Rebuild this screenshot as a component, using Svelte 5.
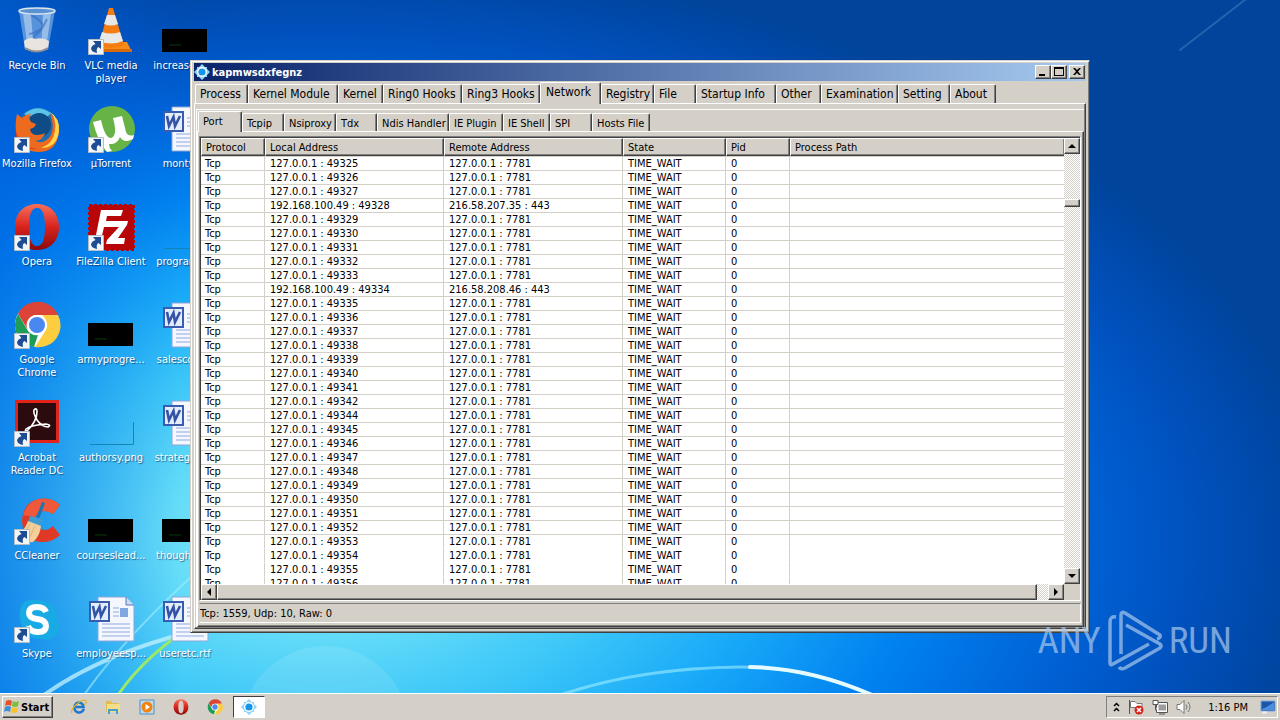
<script>
    const shortcuts = [
        {name: 'Recycle Bin', icon: 'bin'},
        {name: 'Mozilla Firefox', icon: 'firefox', link: true},
        {name: 'Opera', icon: 'opera', link: true},
        {name: 'Google Chrome', icon: 'chrome', link: true},
        {name: 'Acrobat Reader DC', icon: 'acrobat', link: true},
        {name: 'CCleaner', icon: 'ccleaner', link: true},
        {name: 'Skype', icon: 'skype', link: true},
        {name: 'VLC media player', icon: 'vlc', link: true},
        {name: 'µTorrent', icon: 'utorrent', link: true},
        {name: 'FileZilla Client', icon: 'filezilla', link: true},
        {name: 'armyprogre...', icon: 'black'},
        {name: 'authorsy.png', icon: 'faint'},
        {name: 'courseslead...', icon: 'black'},
        {name: 'employeesp...', icon: 'word'},
        {name: 'increasepo...', icon: 'black'},
        {name: 'monty.rtf', icon: 'word'},
        {name: 'programa...', icon: 'faint'},
        {name: 'salescont...', icon: 'word'},
        {name: 'strategyre...', icon: 'word'},
        {name: 'thoughtm...', icon: 'black'},
        {name: 'useretc.rtf', icon: 'word'}
    ];

    const mainTabs = [
        {name: 'Process', width: 53},
        {name: 'Kernel Module', width: 90},
        {name: 'Kernel', width: 45},
        {name: 'Ring0 Hooks', width: 79},
        {name: 'Ring3 Hooks', width: 78},
        {name: 'Network', width: 61},
        {name: 'Registry', width: 53},
        {name: 'File', width: 42},
        {name: 'Startup Info', width: 80},
        {name: 'Other', width: 45},
        {name: 'Examination', width: 77},
        {name: 'Setting', width: 52},
        {name: 'About', width: 46}
    ];

    const networkTabs = [
        {name: 'Port', width: 44},
        {name: 'Tcpip', width: 42},
        {name: 'Nsiproxy', width: 52},
        {name: 'Tdx', width: 41},
        {name: 'Ndis Handler', width: 72},
        {name: 'IE Plugin', width: 54},
        {name: 'IE Shell', width: 47},
        {name: 'SPI', width: 42},
        {name: 'Hosts File', width: 58}
    ];

    // connections that leave the machine, all others go to the local proxy
    const outgoing = {
        49328: '216.58.207.35 : 443',
        49334: '216.58.208.46 : 443'
    };

    const connections = [];
    for (let port = 49325; port <= 49356; port++) {
        if (port === 49343) continue;
        connections.push({
            local: `${outgoing[port] ? '192.168.100.49' : '127.0.0.1'} : ${port}`,
            remote: outgoing[port] ?? '127.0.0.1 : 7781'
        });
    }

    const pinned = [
        {name: 'Internet Explorer', icon: 'ie'},
        {name: 'Windows Explorer', icon: 'folder'},
        {name: 'Media Player', icon: 'player'},
        {name: 'Opera', icon: 'opera'},
        {name: 'Chrome', icon: 'chrome'}
    ];

    let mainTab = $state('Network');
    let networkTab = $state('Port');
</script>

{#snippet picture(kind)}
    {#if kind === 'bin'}
        <svg viewBox="0 0 48 48">
            <path d="M6 4L12 42Q24 48 35 42L42 4Z" fill="#9cc4ec" fill-opacity=".55"/>
            <path d="M10 7L15 42L21 44L18 8ZM30 8L28 43L33 41L38 7Z" fill="#e4f0fb" fill-opacity=".45"/>
            <path d="M18 8Q30 14 30 20Q24 26 16 27M34 12Q28 26 20 30" stroke="#2a62b4" stroke-width="2" fill="none" opacity=".5"/>
            <path d="M11 34Q16 29 22 32Q30 30 36 34L35 42Q24 48 12 42Z" fill="#e9e4df"/>
            <path d="M12 41Q24 48 35 41" stroke="#8d8d92" stroke-width="2" fill="none"/>
            <ellipse cx="24" cy="4" rx="18" ry="3" fill="#5b92d4" stroke="#dce6ee" stroke-width="1.5"/>
        </svg>
    {:else if kind === 'firefox'}
        <svg viewBox="0 0 48 48">
            <circle cx="25" cy="24" r="21" fill="#1f6fb0"/>
            <path d="M11 9Q24 -2 38 8Q34 14 24 12Q16 12 11 9Z" fill="#5cc3e8"/>
            <circle cx="26" cy="20" r="12" fill="#0f4c86"/>
            <path d="M4 9L9 13Q13 9 18 9Q15 13 18 17L23 19Q22 23 17 24Q18 30 24 30Q29 30 32 28Q30 35 22 36Q32 40 38 30Q42 20 37 9Q46 15 46 25Q45 47 25 47Q5 46 3 28Q2 17 4 9Z" fill="#ee6a1f"/>
            <path d="M37 7Q44 14 42 26Q40 39 28 43Q44 43 46 26Q47 13 37 7Z" fill="#ffd54a"/>
            <path d="M3 26Q8 42 24 44Q7 46 3 30Z" fill="#d5421b"/>
        </svg>
    {:else if kind === 'opera'}
        <svg viewBox="0 0 48 48">
            <defs>
                <linearGradient id="operaRed" x1="0" y1="0" x2="0" y2="1">
                    <stop offset="0" stop-color="#f8705c"/>
                    <stop offset=".5" stop-color="#d8231d"/>
                    <stop offset="1" stop-color="#8c0a0c"/>
                </linearGradient>
            </defs>
            <path fill-rule="evenodd" d="M24 1C37 1 46 10 46 24S37 47 24 47S2 38 2 24S11 1 24 1ZM24 5C18 5 16 13 16 24S18 43 24 43S32 35 32 24S30 5 24 5Z" fill="url(#operaRed)"/>
        </svg>
    {:else if kind === 'chrome'}
        <svg viewBox="0 0 48 48">
            <circle cx="24" cy="24" r="22" fill="#fff"/>
            <path d="M5 13A22 22 0 0 1 45 14L24 14A10 10 0 0 0 15 29Z" fill="#dc4437"/>
            <path d="M5 13L15 30Q19 35 25 34L21 46A22 22 0 0 1 5 13Z" fill="#1f9d57"/>
            <path d="M24 14H45A22 22 0 0 1 22 46L33 29Q36 20 29 14Z" fill="#fdcd40"/>
            <circle cx="24" cy="24" r="10" fill="#fff"/>
            <circle cx="24" cy="24" r="8" fill="#4a87f0"/>
        </svg>
    {:else if kind === 'acrobat'}
        <svg viewBox="0 0 48 48">
            <path d="M2 1H46V44H2Z" fill="#e2231a"/>
            <path d="M5 4H43V41H5Z" fill="#2b0b0e"/>
            <path d="M21 11Q24 8 24 13Q24 22 14 32Q11 34 13 30Q18 26 33 25Q39 26 35 28Q29 28 24 21Q20 14 21 11Z" fill="none" stroke="#fff" stroke-width="1.6"/>
        </svg>
    {:else if kind === 'ccleaner'}
        <svg viewBox="0 0 48 48">
            <path d="M47 8Q38 0 26 2Q10 5 9 24Q10 43 27 45Q39 46 47 38L40 29Q34 35 28 32Q22 29 22 22Q24 14 31 14Q36 14 40 17Z" fill="#df3a26"/>
            <path d="M26 2Q14 5 10 18L22 20Q25 13 31 14Q36 14 40 17L47 8Q38 0 26 2Z" fill="#f0583a"/>
            <path d="M29 5L32 6L26 22L23 21Z" fill="#1b74b8"/>
            <path d="M17 19L30 22L28 30L15 25Z" fill="#3e9cd4"/>
            <path d="M15 24L28 29Q27 39 20 45Q8 46 2 40Q11 35 15 24Z" fill="#f3cf9a"/>
            <path d="M17 27L9 41M22 29L15 44" stroke="#e0b278"/>
        </svg>
    {:else if kind === 'skype'}
        <svg viewBox="0 0 48 48">
            <path d="M8 12Q11 4 20 5Q26 5 29 6Q44 8 44 24Q48 32 44 39Q38 47 28 44Q12 44 9 31Q5 20 8 12Z" fill="#18aae4"/>
            <path d="M33 17Q31 12 24 12Q16 12 16 18Q16 23 24 24Q33 25 33 31Q33 37 25 37Q17 37 15 31" fill="none" stroke="#fff" stroke-width="6"/>
        </svg>
    {:else if kind === 'vlc'}
        <svg viewBox="0 0 48 48">
            <path d="M12 35H40L45 45H7Z" fill="#f58c1a"/>
            <path d="M7 42H45V45H7Z" fill="#d96b08"/>
            <path d="M22 1H26L37 38Q24 44 12 38Z" fill="#f47c10"/>
            <path d="M20 8H28L31 17Q24 20 17 17ZM15 25Q24 28 33 25L36 34Q24 39 12 34Z" fill="#e8e8e8"/>
        </svg>
    {:else if kind === 'utorrent'}
        <svg viewBox="0 0 48 48">
            <circle cx="25" cy="24" r="23" fill="#67b346"/>
            <path d="M6 17L14 15Q18 33 24 33Q31 31 26 13L35 11L39 27Q41 32 47 30L46 34Q37 39 33 32Q30 40 22 39Q22 43 25 46L20 47Q11 37 6 17Z" fill="#fff"/>
        </svg>
    {:else if kind === 'filezilla'}
        <svg viewBox="0 0 48 48">
            <path d="M2 2H47V47H2Z" fill="#b80608" stroke="#b80608" stroke-width="2" stroke-dasharray="3 2"/>
            <path d="M14 7H36L34 13H20L19 18H29L28 24H17L14 37H8ZM25 18H41L40 22L31 35H38L37 41H19L20 37L32 24H24Z" fill="#fff"/>
        </svg>
    {:else if kind === 'black'}
        <svg viewBox="0 0 48 48">
            <path d="M1 22H46V45H1Z" fill="#000"/>
            <path d="M8 38H20" stroke="#0a3b0a"/>
        </svg>
    {:else if kind === 'faint'}
        <svg viewBox="0 0 48 48">
            <path d="M3 45.500H46.500V23" fill="none" stroke="#1484b4" stroke-width="1"/>
        </svg>
    {:else if kind === 'word'}
        <svg viewBox="0 0 48 48">
            <path d="M11 2H39L47 10V46H11Z" fill="#f4f8fe" stroke="#8aa6d8"/>
            <path d="M39 2V10H47" fill="#cddcf4" stroke="#5777bb"/>
            <path d="M26 13H32M26 17H32M26 21H32M15 29H43M15 33H43M15 37H43M15 41H43" stroke="#8fa9dc"/>
            <path d="M33 13H41V22H33Z" fill="#7fa8e0"/>
            <path d="M3 7H22V26H3Z" fill="#e4edfb" stroke="#3a5cb0" stroke-width="2"/>
            <path d="M6 11L8 21L12.500 12L14 21L19 11" fill="none" stroke="#3453a6" stroke-width="2.6"/>
        </svg>
    {:else if kind === 'ie'}
        <svg viewBox="0 0 16 16">
            <path d="M13 10Q11 14 7 13.500Q3 12 3.500 8Q4 4 8 3.500Q12 4 12.500 8H5" fill="none" stroke="#1c78d0" stroke-width="2.600"/>
            <path d="M1 14Q-1 11 6 5Q13 -1 15 2Q16 4 13 6" fill="none" stroke="#e8b21c" stroke-width="1.200"/>
        </svg>
    {:else if kind === 'folder'}
        <svg viewBox="0 0 16 16">
            <path d="M1 2H6L7 4H14V13H1Z" fill="#e4bc4c"/>
            <path d="M2 5H15V13H2Z" fill="#f6de88"/>
            <path d="M3 15V10H13V15H11V12H5V15Z" fill="#45a0d0"/>
        </svg>
    {:else if kind === 'player'}
        <svg viewBox="0 0 16 16">
            <path d="M1 1H15V15H1Z" fill="#b9dcf2" stroke="#4c8fc8"/>
            <circle cx="8" cy="8" r="5.500" fill="#f3820f"/>
            <path d="M6.500 5L11 8L6.500 11Z" fill="#fff"/>
        </svg>
    {:else if kind === 'gear'}
        <svg viewBox="0 0 16 16">
            <path d="M8 0L11 3H13V5L16 8L13 11V13H11L8 16L5 13H3V11L0 8L3 5V3H5Z" fill="#8fd3fb"/>
            <circle cx="8" cy="8" r="5" fill="#fff"/>
            <circle cx="8" cy="8" r="3.600" fill="#1596ea"/>
        </svg>
    {/if}
{/snippet}

{#snippet arrow(path)}
    <svg class="arrow" viewBox="0 0 8 8"><path d={path}/></svg>
{/snippet}

<div class="screen">
    <main class="desktop">
        <svg class="streaks" viewBox="0 0 1280 693" preserveAspectRatio="none">
            <circle cx="325" cy="730" r="84" fill="#fff" opacity=".1"/>
            <g fill="none" stroke-linecap="round">
                <path d="M44 695Q100 655 190 632Q280 590 380 470" stroke="#c4f2ff" stroke-width="4" opacity=".75"/>
                <path d="M84 695Q130 630 210 560" stroke="#a4ecfb" stroke-width="2" opacity=".6"/>
                <path d="M118 695Q145 655 200 620" stroke="#9be869" stroke-width="3"/>
                <path d="M560 695Q640 668 740 667Q810 667 872 695" stroke="#9cecff" stroke-width="3" opacity=".6"/>
                <path d="M750 667Q810 668 872 695" stroke="#e4faff" stroke-width="4"/>
                <path d="M1180 50L1250 -4" stroke="#4d8cc4" stroke-width="2" opacity=".45"/>
            </g>
        </svg>

        <ul class="shortcuts">
            {#each shortcuts as item}
                <li>
                    <div class="picture">
                        {@render picture(item.icon)}
                        {#if item.link}
                            <svg class="link" viewBox="0 0 16 16">
                                <path d="M.5.500H15.500V15.500H.5Z" fill="#f2f5f8" stroke="#b4bcc6"/>
                                <path d="M5 2H13V10L10.500 8Q8 9 9 14Q3 13 3 9Q4 6 7.500 5Z" fill="#1d4c92"/>
                            </svg>
                        {/if}
                    </div>
                    <span>{item.name}</span>
                </li>
            {/each}
        </ul>

        <section class="window">
            <header class="titlebar">
                <div class="app-icon">{@render picture('gear')}</div>
                <h1>kapmwsdxfegnz</h1>
                <button class="raised" aria-label="Minimize">
                    <svg viewBox="0 0 12 10"><path d="M2 7H8V9H2Z"/></svg>
                </button>
                <button class="raised" aria-label="Maximize">
                    <svg viewBox="0 0 12 10"><path fill-rule="evenodd" d="M1 0H11V9H1ZM2 2V8H10V2Z"/></svg>
                </button>
                <button class="raised close" aria-label="Close">
                    <svg viewBox="0 0 12 10"><path d="M2 1H4L6 3L8 1H10L7 4.500L10 8H8L6 6L4 8H2L5 4.500Z"/></svg>
                </button>
            </header>

            <nav class="tabs main-tabs">
                {#each mainTabs as tab}
                    <button class:selected={mainTab === tab.name} style="width: {tab.width}px" onclick={() => mainTab = tab.name}>{tab.name}</button>
                {/each}
            </nav>

            <div class="panel main-panel">
                <div class="dialog">
                    <nav class="tabs">
                        {#each networkTabs as tab}
                            <button class:selected={networkTab === tab.name} style="width: {tab.width}px" onclick={() => networkTab = tab.name}>{tab.name}</button>
                        {/each}
                    </nav>

                    <div class="panel network-panel">
                        <div class="list">
                            <div class="rows">
                                <table>
                                    <colgroup>
                                        <col class="protocol">
                                        <col class="address">
                                        <col class="address">
                                        <col class="state">
                                        <col class="pid">
                                        <col>
                                    </colgroup>
                                    <thead>
                                        <tr>
                                            <th>Protocol</th>
                                            <th>Local Address</th>
                                            <th>Remote Address</th>
                                            <th>State</th>
                                            <th>Pid</th>
                                            <th>Process Path</th>
                                        </tr>
                                    </thead>
                                    <tbody>
                                        {#each connections as row, i}
                                            <tr class:bare={i > 26}>
                                                <td>Tcp</td>
                                                <td>{row.local}</td>
                                                <td>{row.remote}</td>
                                                <td>TIME_WAIT</td>
                                                <td>0</td>
                                                <td></td>
                                            </tr>
                                        {/each}
                                    </tbody>
                                </table>
                            </div>
                            <div class="scroll vertical">
                                <button class="raised" aria-label="Scroll up">{@render arrow('M4 2L8 6H0Z')}</button>
                                <div class="track before"></div>
                                <div class="thumb raised"></div>
                                <div class="track"></div>
                                <button class="raised" aria-label="Scroll down">{@render arrow('M0 2H8L4 6Z')}</button>
                            </div>
                            <div class="scroll horizontal">
                                <button class="raised" aria-label="Scroll left">{@render arrow('M6 0V8L2 4Z')}</button>
                                <div class="thumb raised"></div>
                                <div class="track"></div>
                                <button class="raised" aria-label="Scroll right">{@render arrow('M2 0L6 4L2 8Z')}</button>
                            </div>
                        </div>
                        <footer class="status">Tcp: 1559, Udp: 10, Raw: 0</footer>
                    </div>
                </div>
            </div>
        </section>

        <div class="watermark">
            <span>ANY</span>
            <svg viewBox="0 0 56 62">
                <path d="M9 7Q3 6 3 12V53Q3 56 6 54L42 34M14 44V5Q14 1 18 3L53 25Q54 28 50 29M19 15L53 34Q55 36 53 38L18 58Q14 60 12 57" fill="none" stroke="currentColor" stroke-width="3.500" stroke-linejoin="round"/>
            </svg>
            <span>RUN</span>
        </div>
    </main>

    <footer class="taskbar">
        <button class="start raised">
            <svg viewBox="0 0 16 16">
                <path d="M2 2Q5 0 8 2L7 7Q4 5 1 7Z" fill="#e8502a"/>
                <path d="M9 2Q12 4 15 2L14 7Q11 9 8 7Z" fill="#7cbf3c"/>
                <path d="M1 8Q4 6 7 8L6 13Q3 11 0 13Z" fill="#3f8fd8"/>
                <path d="M8 8Q11 10 14 8L13 13Q10 15 7 13Z" fill="#f8c228"/>
            </svg>
            Start
        </button>
        <nav class="pinned">
            {#each pinned as app}
                <button aria-label={app.name}>{@render picture(app.icon)}</button>
            {/each}
        </nav>
        <button class="running" aria-label="kapmwsdxfegnz">{@render picture('gear')}</button>
        <div class="tray">
            <svg class="chevrons" viewBox="0 0 7 10"><path d="M1 4L3.500 1.500L6 4M1 9L3.500 6.500L6 9" fill="none" stroke="#000" stroke-width="1.500"/></svg>
            <svg viewBox="0 0 16 16">
                <path d="M1.500 1V15" stroke="#555"/>
                <path d="M2.500 2.500H7L9 4.500H14V10H9L7 8.500H2.500Z" fill="#fff" stroke="#777"/>
                <circle cx="11" cy="11" r="4.500" fill="#d8231d"/>
                <path d="M9 9L13 13M13 9L9 13" stroke="#fff" stroke-width="1.500"/>
            </svg>
            <svg viewBox="0 0 16 16">
                <path d="M5.500 4.500H15V12.500H5.500Z" fill="#9c9c9c" stroke="#fff" stroke-width="2"/>
                <path d="M4.500 3.500H15.500V13.500H4.500ZM7 15H13" fill="none" stroke="#555"/>
                <path d="M1 1.500H6V5.500H1ZM3.500 6V11H5" fill="#fff" stroke="#555"/>
            </svg>
            <svg viewBox="0 0 16 16">
                <path d="M1 5.500H4L8 1.500V14.500L4 10.500H1Z" fill="#fff" stroke="#777"/>
                <path d="M10 5.500Q12 8 10 10.500M12 3Q16 8 12 13" fill="none" stroke="#777"/>
            </svg>
            <time>1:16 PM</time>
            <svg viewBox="0 0 16 16">
                <path d="M1 2H15V12H1Z" fill="#1d55a8" stroke="#7fa7d8"/>
                <path d="M2 10Q8 8 14 3V11H2Z" fill="#4b8fe0"/>
                <path d="M2 13.500H7" stroke="#e8f0fa" stroke-width="2"/>
            </svg>
        </div>
    </footer>
</div>

<style>
    :global(body) {
        margin: 0;
    }

    .screen {
        --face: #d4d0c8;
        --shade: #808080;
        --dark: #404040;
        height: 100vh;
        display: flex;
        flex-direction: column;
        font-family: "DejaVu Sans Condensed", "Noto Sans", sans-serif;
        font-size: 11px;
        line-height: 13px;
        color: #000;
        overflow: hidden;
    }

    button {
        font: inherit;
        color: inherit;
        background: var(--face);
        border: 0;
        padding: 0;
        margin: 0;
    }

    svg {
        display: block;
    }

    .raised {
        background: var(--face);
        border: 1px solid;
        border-color: #fff var(--dark) var(--dark) #fff;
        box-shadow: inset -1px -1px var(--shade);
        box-sizing: border-box;
    }

    .desktop {
        position: relative;
        flex: 1;
        min-height: 0;
        background:
            linear-gradient(90deg, rgba(0, 100, 225, 0.6), rgba(0, 100, 225, 0) 14%),
            radial-gradient(1000px 580px at 320px 540px, #8ceaf8 0%, #64dcf8 16%, #38c4f8 32%, #18a8f8 45%, #0082f0 60%, #0062d6 76%, #0050bc 88%, #00449c 100%);
    }

    .streaks {
        position: absolute;
        inset: 0;
        width: 100%;
        height: 100%;
    }

    .shortcuts {
        position: relative;
        display: grid;
        grid-auto-flow: column;
        grid-template-rows: repeat(7, 98px);
        grid-auto-columns: 74px;
        margin: 0;
        padding: 7px 0 0;
        list-style: none;
    }

    .shortcuts li {
        display: flex;
        flex-direction: column;
        align-items: center;
        gap: 4px;
        color: #fff;
        text-align: center;
        text-shadow: 1px 1px 1px rgba(0, 30, 80, 0.6);
    }

    .picture {
        position: relative;
        width: 48px;
        height: 48px;
    }

    .picture .link {
        position: absolute;
        left: 1px;
        bottom: 0;
        width: 16px;
        height: 16px;
    }

    .window {
        position: absolute;
        top: 60px;
        right: 190px;
        bottom: 60px;
        left: 190px;
        display: flex;
        flex-direction: column;
        box-sizing: border-box;
        padding: 2px 3px 3px;
        background: var(--face);
        border: 1px solid;
        border-color: var(--face) var(--dark) var(--dark) var(--face);
        box-shadow: inset 1px 1px #fff, inset -1px -1px var(--shade);
    }

    .titlebar {
        display: flex;
        align-items: center;
        height: 18px;
        padding-right: 1px;
        background: linear-gradient(90deg, #0a246a, #a6caf0);
    }

    .app-icon {
        width: 16px;
        margin-right: 2px;
    }

    h1 {
        flex: 1;
        margin: 0;
        color: #fff;
        font-size: 11px;
    }

    .titlebar button {
        width: 16px;
        height: 14px;
        padding: 1px;
    }

    .titlebar .close {
        margin-left: 2px;
    }

    .tabs {
        display: flex;
        align-items: flex-end;
        position: relative;
        z-index: 1;
        padding: 1px 1px 0;
    }

    .tabs button {
        flex: none;
        box-sizing: border-box;
        height: 18px;
        padding: 1px 0 0 4px;
        border: solid;
        border-width: 1px 1px 0;
        border-color: #fff var(--dark) #fff #fff;
        border-radius: 2px 2px 0 0;
        box-shadow: inset -1px 0 var(--shade);
        text-align: left;
        white-space: nowrap;
    }

    .tabs .selected {
        height: 21px;
        margin-bottom: -1px;
        padding-bottom: 3px;
        background: var(--face);
    }

    .main-tabs {
        font-size: 12px;
    }

    .main-tabs button {
        height: 19px;
    }

    .main-tabs .selected {
        height: 22px;
        padding-left: 5px;
    }

    .panel,
    .dialog {
        flex: 1;
        min-height: 0;
        display: flex;
        flex-direction: column;
    }

    .panel {
        border: 1px solid;
        border-color: #fff var(--dark) var(--dark) #fff;
        box-shadow: inset -1px -1px var(--shade);
    }

    .main-panel {
        padding: 5px 1px 1px;
    }

    .dialog {
        border: solid #fff;
        border-width: 1px 0 0 1px;
    }

    .network-panel {
        padding: 4px 2px 3px 1px;
    }

    .list {
        flex: 1;
        min-height: 0;
        display: grid;
        grid-template: minmax(0, 1fr) 16px / minmax(0, 1fr) 16px;
        border: 1px solid;
        border-color: var(--shade) #fff #fff var(--shade);
        box-shadow: inset 1px 1px var(--dark);
        padding: 1px 0 0 1px;
    }

    .rows {
        overflow: hidden;
        background: #fff;
    }

    table {
        width: 100%;
        table-layout: fixed;
        border-spacing: 0;
    }

    .protocol,
    .pid {
        width: 64px;
    }

    .address {
        width: 179px;
    }

    .state {
        width: 103px;
    }

    th {
        height: 18px;
        box-sizing: border-box;
        padding: 0 0 0 4px;
        background: var(--face);
        border: 1px solid;
        border-color: #fff var(--dark) var(--dark) #fff;
        box-shadow: inset -1px -1px var(--shade);
        font-weight: normal;
        text-align: left;
    }

    td {
        height: 13px;
        padding: 0 0 0 5px;
        border-right: 1px solid #d4d0c8;
        border-bottom: 1px solid #d4d0c8;
    }

    td:first-child {
        padding-left: 4px;
    }

    td:last-child,
    th:last-child {
        border-right: 0;
    }

    tr:first-child td {
        border-top: 1px solid #d4d0c8;
    }

    .bare td {
        border-bottom-color: #fff;
    }

    .scroll {
        display: flex;
    }

    .vertical {
        flex-direction: column;
    }

    .scroll button {
        flex: none;
        width: 16px;
        height: 16px;
        padding: 3px;
    }

    .arrow {
        width: 8px;
        height: 8px;
    }

    .track {
        flex: 1;
        background: repeating-conic-gradient(#fff 0 25%, #d4d0c8 0 50%) 0 0 / 2px 2px;
    }

    .track.before {
        flex: 0 0 10%;
    }

    .vertical .thumb {
        height: 8px;
    }

    .horizontal .thumb {
        flex: 0 1 95%;
    }

    .status {
        margin-top: 2px;
        padding: 3px 0 2px;
        border: 1px solid;
        border-color: var(--shade) #fff #fff var(--face);
    }

    .watermark {
        position: absolute;
        right: 48px;
        bottom: 21px;
        display: flex;
        align-items: center;
        gap: 6px;
        color: #a8c8ec;
        opacity: 0.7;
        font-family: "Roboto Condensed", "Liberation Sans Narrow", Roboto, sans-serif;
        font-size: 37px;
        font-weight: 400;
        line-height: 60px;
    }

    .watermark svg {
        width: 56px;
        height: 62px;
    }

    .taskbar {
        display: flex;
        align-items: center;
        height: 26px;
        padding: 0 2px;
        border-top: 1px solid #fff;
        background: var(--face);
    }

    .start {
        display: flex;
        align-items: center;
        gap: 1px;
        height: 22px;
        padding: 0 3px 0 1px;
        font-size: 11px;
        font-weight: bold;
    }

    .start svg {
        width: 16px;
    }

    .pinned {
        display: flex;
        gap: 18px;
        margin: 0 10px 0 18px;
    }

    .pinned button {
        width: 16px;
        height: 16px;
    }

    .running {
        display: flex;
        align-items: center;
        justify-content: center;
        width: 32px;
        height: 22px;
        background: #fff;
        border: 1px solid;
        border-color: var(--dark) #fff #fff var(--dark);
    }

    .running :global(svg) {
        width: 16px;
    }

    .tray {
        display: flex;
        align-items: center;
        gap: 8px;
        margin-left: auto;
        height: 20px;
        padding: 0 1px 0 6px;
        border: 1px solid;
        border-color: var(--shade) #fff #fff var(--shade);
    }

    .tray svg {
        width: 16px;
        height: 16px;
    }

    .tray .chevrons {
        width: 7px;
        height: 10px;
    }

    .tray time {
        margin: 0 4px 0 8px;
    }
</style>
